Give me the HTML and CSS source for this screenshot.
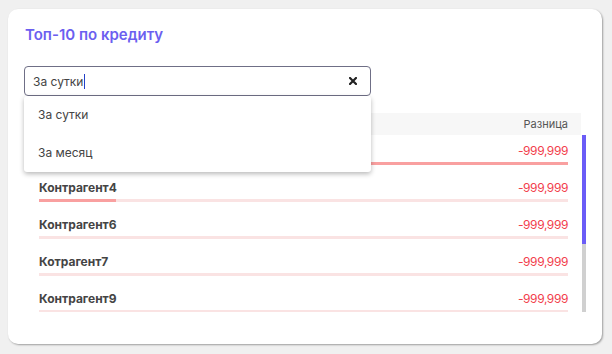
FILE: index.html
```html
<!DOCTYPE html>
<html lang="ru">
<head>
    <meta charset="UTF-8">
    <meta name="viewport" content="width=device-width, initial-scale=1.0">
    <title>Топ-10 по кредиту</title>
    <link rel="stylesheet" href="styles.css">
</head>
<body>
    <div class="card">
        <h2 class="card-title">Топ-10 по кредиту</h2>

        <div class="period">
            <div class="period-input">
                <span class="period-value">За сутки</span><span class="caret"></span>
                <svg class="clear" width="8" height="8" viewBox="0 0 8 8">
                    <path d="M1 1 L7 7 M7 1 L1 7" stroke="#222" stroke-width="2.2" stroke-linecap="square"/>
                </svg>
            </div>
            <div class="period-menu">
                <div class="period-option">За сутки</div>
                <div class="period-option">За месяц</div>
            </div>
        </div>

        <div class="top-table">
            <div class="top-head">
                <span>Разница</span>
            </div>
            <div class="top-scroll">
                <div class="top-body">
                    <div class="top-row">
                        <div class="top-line"><span class="name"></span><span class="diff">-999,999</span></div>
                        <div class="bar"><div class="bar-fill" style="width: 100%"></div></div>
                    </div>
                    <div class="top-row">
                        <div class="top-line"><span class="name">Контрагент4</span><span class="diff">-999,999</span></div>
                        <div class="bar"><div class="bar-fill" style="width: 14.6%"></div></div>
                    </div>
                    <div class="top-row">
                        <div class="top-line"><span class="name">Контрагент6</span><span class="diff">-999,999</span></div>
                        <div class="bar"><div class="bar-fill" style="width: 0%"></div></div>
                    </div>
                    <div class="top-row">
                        <div class="top-line"><span class="name">Котрагент7</span><span class="diff">-999,999</span></div>
                        <div class="bar"><div class="bar-fill" style="width: 0%"></div></div>
                    </div>
                    <div class="top-row">
                        <div class="top-line"><span class="name">Контрагент9</span><span class="diff">-999,999</span></div>
                        <div class="bar"><div class="bar-fill" style="width: 0%"></div></div>
                    </div>
                </div>
                <div class="scrollbar"><div class="scrollbar-thumb"></div></div>
            </div>
        </div>
    </div>
</body>
</html>
```

FILE: styles.css
```css
body {
    font-family: Inter, "Noto Sans", sans-serif;
    background-color: #f0f0f0;
    margin: 0;
    padding: 9px 10px 10px 8px;
}
.card {
    width: 594px;
    height: 335px;
    box-sizing: border-box;
    background-color: #ffffff;
    border-radius: 10px;
    box-shadow: 1px 1px 2px rgba(0,0,0,0.35);
    padding: 16px;
}
.card-title {
    margin: 0 0 0 1px;
    font-size: 15px;
    line-height: 20px;
    font-weight: 600;
    color: #6c5ff0;
}
.period {
    position: relative;
    margin-top: 21px;
    width: 347px;
}
.period-input {
    height: 30px;
    box-sizing: border-box;
    border: 1px solid #6f6f86;
    border-radius: 4px;
    display: flex;
    align-items: center;
    padding: 0 9px 0 8px;
    font-size: 12px;
    color: #444;
}
.caret {
    display: inline-block;
    width: 1px;
    height: 15px;
    background-color: #2340c8;
    margin-left: 1px;
}
.clear {
    margin-left: auto;
    margin-right: 4px;
}
.period-menu {
    position: absolute;
    left: 0;
    right: 0;
    top: 30px;
    background-color: #ffffff;
    border-radius: 3px;
    box-shadow: 0 2px 5px rgba(0,0,0,0.28);
    z-index: 2;
}
.period-option {
    height: 38px;
    line-height: 37px;
    padding-left: 14px;
    font-size: 12px;
    color: #444;
}
.top-table {
    margin-top: 17px;
}
.top-head {
    height: 22px;
    margin-right: 5px;
    background-color: #f7f7f7;
    display: flex;
    justify-content: flex-end;
    align-items: center;
    padding: 0 13px 0 15px;
    font-size: 11px;
    color: #555;
}
.top-scroll {
    height: 177px;
    display: flex;
}
.top-body {
    flex: 1;
    overflow: hidden;
}
.scrollbar {
    width: 4px;
    margin-left: 1px;
    background-color: #d0d0d0;
}
.scrollbar-thumb {
    height: 109px;
    background-color: #6b5cf7;
}
.top-row {
    padding: 8px 13px 7px 15px;
}
.top-line {
    display: flex;
    justify-content: space-between;
    height: 16px;
    line-height: 16px;
    font-size: 12px;
}
.name {
    font-weight: 700;
    color: #444;
}
.diff {
    color: #f2404c;
    letter-spacing: -0.4px;
}
.bar {
    margin-top: 3px;
    height: 3px;
    background-color: #fae3e3;
}
.bar-fill {
    height: 100%;
    background-color: #f9a0a0;
}
```
